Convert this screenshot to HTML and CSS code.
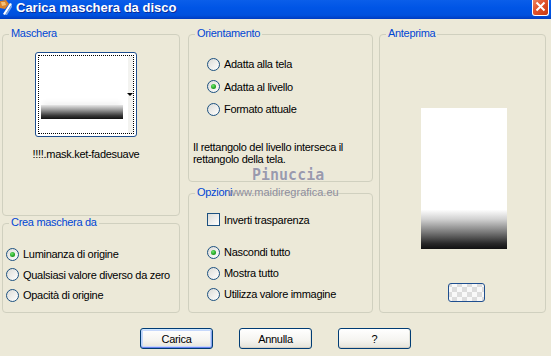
FILE: index.html
```html
<!DOCTYPE html>
<html lang="it">
<head>
    <meta charset="UTF-8">
    <title>Carica maschera da disco</title>
    <link rel="stylesheet" href="styles.css">
</head>
<body>
    <div class="window">
        <!-- Barra del titolo -->
        <div class="titlebar">
            <svg class="app-icon" width="12" height="16" viewBox="0 0 12 16">
                <path d="M0 1 L6 0 L9 4 L5 9 L0 8 Z" fill="#d9822b"/>
                <path d="M1 2 L5 2 L6 5 L2 6 Z" fill="#f3c27a"/>
                <path d="M3 14 L10 3 L12 4 L5 15 Z" fill="#ffffff"/>
                <path d="M5 15 L12 4 L12 7 L7 15 Z" fill="#7aa7e8"/>
            </svg>
            <span class="title">Carica maschera da disco</span>
            <span class="close">
                <svg width="15" height="15" viewBox="0 0 15 15">
                    <path d="M3.5 3.5 L11.5 11.5 M11.5 3.5 L3.5 11.5" stroke="#fff" stroke-width="2"/>
                </svg>
            </span>
        </div>

        <div class="client">
            <div class="panes">
                <div class="col col-left">
                    <div class="group g-maschera">
                        <span class="legend">Maschera</span>
                        <div class="thumb-wrap">
                            <div class="thumb">
                                <div class="focus">
                                    <div class="thumb-bar"></div>
                                    <span class="thumb-strip"></span>
                                    <span class="arrow"></span>
                                </div>
                            </div>
                            <div class="mask-name">!!!!.mask.ket-fadesuave</div>
                        </div>
                    </div>

                    <div class="group g-crea">
                        <span class="legend">Crea maschera da</span>
                        <div class="opts opts-crea">
                            <div class="opt"><span class="radio on"></span>Luminanza di origine</div>
                            <div class="opt"><span class="radio"></span>Qualsiasi valore diverso da zero</div>
                            <div class="opt"><span class="radio"></span>Opacità di origine</div>
                        </div>
                    </div>
                </div>

                <div class="col col-mid">
                    <div class="group g-orient">
                        <span class="legend">Orientamento</span>
                        <div class="opts opts-orient">
                            <div class="opt"><span class="radio"></span>Adatta alla tela</div>
                            <div class="opt"><span class="radio on"></span>Adatta al livello</div>
                            <div class="opt"><span class="radio"></span>Formato attuale</div>
                        </div>
                        <p class="note">Il rettangolo del livello interseca il<br>rettangolo della tela.</p>
                    </div>

                    <div class="group g-opzioni">
                        <span class="legend">Opzioni</span>
                        <div class="opts opts-opzioni">
                            <div class="opt opt-check"><span class="check"></span>Inverti trasparenza</div>
                            <div class="radios">
                                <div class="opt"><span class="radio on"></span>Nascondi tutto</div>
                                <div class="opt"><span class="radio"></span>Mostra tutto</div>
                                <div class="opt"><span class="radio"></span>Utilizza valore immagine</div>
                            </div>
                        </div>
                    </div>
                </div>

                <div class="col col-right">
                    <div class="group g-anteprima">
                        <span class="legend">Anteprima</span>
                        <div class="preview"></div>
                        <div class="preview-btn"></div>
                    </div>
                </div>
            </div>

            <div class="buttons">
                <button class="btn btn-default">Carica</button>
                <button class="btn">Annulla</button>
                <button class="btn">?</button>
            </div>
        </div>

        <!-- Filigrana -->
        <div class="watermark">
            <span class="wm-name">Pinuccia</span>
            <span class="wm-site">www.maidiregrafica.eu</span>
        </div>
    </div>
</body>
</html>
```

FILE: styles.css
```css
/* Finestra di dialogo stile XP */
body {
    margin: 0;
    background-color: #ece9d8;
    font-family: 'Liberation Sans', Arial, sans-serif;
    font-size: 11px;
    letter-spacing: -0.3px;
    color: #000000;
}

.window {
    position: relative;
    width: 551px;
    height: 356px;
    overflow: hidden;
}

/* Barra del titolo */
.titlebar {
    display: flex;
    align-items: flex-start;
    height: 19px;
    background: linear-gradient(#0a5eea, #0055e6 40%, #0051de 80%, #003cc0);
}

.app-icon {
    flex: none;
}

.title {
    margin-left: 4px;
    line-height: 15px;
    font-size: 13px;
    font-weight: bold;
    letter-spacing: 0;
    color: #ffffff;
    text-shadow: 1px 1px 0 #0a2d9a;
}

.close {
    display: flex;
    align-items: center;
    justify-content: center;
    margin-left: auto;
    margin-right: 2px;
    margin-top: -3px;
    width: 17px;
    height: 19px;
    box-sizing: border-box;
    border: 1px solid #ffffff;
    border-top: none;
    border-radius: 0 0 3px 3px;
    background: linear-gradient(135deg, #ef9272, #e2552e 45%, #c9380f);
}

/* Area client */
.client {
    padding: 15px 0 0 2px;
}

.panes {
    display: flex;
    gap: 8px;
}

.col {
    display: flex;
    flex-direction: column;
}

.col-left {
    width: 178px;
    gap: 7px;
}

.col-mid {
    width: 185px;
    gap: 11px;
}

.col-right {
    width: 167px;
    margin-left: -2px;
}

.group {
    position: relative;
    box-sizing: border-box;
    border: 1px solid #d0d0bf;
    border-radius: 4px;
}

.legend {
    position: absolute;
    top: -8px;
    left: 6px;
    padding: 0 2px;
    line-height: 13px;
    background-color: #ece9d8;
    color: #0046d5;
}

.g-maschera { height: 182px; }
.g-crea { height: 90px; }
.g-orient { height: 148px; }
.g-opzioni { height: 120px; }
.g-anteprima { height: 279px; }

/* Miniatura maschera */
.thumb-wrap {
    display: flex;
    flex-direction: column;
    align-items: center;
    width: 102px;
    margin: 17px 0 0 32px;
}

.thumb {
    width: 102px;
    height: 85px;
    box-sizing: border-box;
    padding: 2px;
    border: 1px solid #1f4f8f;
    border-radius: 3px;
    background-color: #ffffff;
}

.focus {
    position: relative;
    height: 100%;
    box-sizing: border-box;
    border: 1px dotted #000000;
}

.thumb-bar {
    width: 82px;
    height: 14px;
    margin: 49px 0 0 2px;
    background: linear-gradient(#e6e6e6, #9a9a9a 35%, #3a3a3a 75%, #111111);
    box-shadow: 0 -5px 5px -2px #f2f2f2;
}

.thumb-strip {
    position: absolute;
    top: 0;
    bottom: 0;
    right: 0;
    width: 5px;
    background-color: #f3f3f0;
}

.arrow {
    position: absolute;
    top: 37px;
    right: 0;
    width: 0;
    height: 0;
    border-left: 3px solid transparent;
    border-right: 3px solid transparent;
    border-top: 3px solid #000000;
}

.mask-name {
    margin-top: 11px;
    line-height: 13px;
    white-space: nowrap;
}

/* Opzioni radio e checkbox */
.opt {
    display: flex;
    align-items: center;
    gap: 4px;
    white-space: nowrap;
}

.radio,
.check {
    flex: none;
    position: relative;
    width: 13px;
    height: 13px;
    box-sizing: border-box;
    border: 1px solid #1c5180;
    background: linear-gradient(135deg, #dcdcd7, #ffffff);
}

.radio {
    border-radius: 50%;
}

.radio.on::after {
    content: '';
    position: absolute;
    left: 3px;
    top: 3px;
    width: 5px;
    height: 5px;
    border-radius: 50%;
    background: radial-gradient(circle at 40% 35%, #6ee86e, #21a121 60%, #178517);
}

.opts-crea {
    padding: 20px 0 0 3px;
}

.opts-crea .opt {
    height: 20.5px;
}

.opts-orient {
    padding: 18px 0 0 18px;
}

.opts-orient .opt {
    height: 22.5px;
}

.note {
    margin: 20px 0 0 4px;
    line-height: 12px;
}

.opts-opzioni {
    padding: 15px 0 0 18px;
}

.opts-opzioni .opt {
    height: 21px;
}

.radios {
    margin-top: 11.5px;
}

/* Anteprima */
.preview {
    width: 86px;
    height: 141px;
    margin: 73px 0 0 41px;
    background: linear-gradient(#ffffff, #ffffff 72%, #d0d0d0 79%, #7a7a7a 88%, #2a2a2a 96%, #111111);
}

.preview-btn {
    width: 37px;
    height: 19px;
    margin: 34px 0 0 68px;
    box-sizing: border-box;
    border: 1px solid #1f4f8f;
    border-radius: 3px;
    background-color: #f4f4f2;
    background-image: conic-gradient(#dcdcdc 25%, #f8f8f8 0 50%, #dcdcdc 0 75%, #f8f8f8 0);
    background-size: 10px 10px;
    background-position: 8px 3px;
}

/* Pulsanti */
.buttons {
    display: flex;
    justify-content: center;
    gap: 26px;
    margin-top: 15px;
    padding-right: 2px;
}

.btn {
    width: 73px;
    height: 21px;
    padding: 0;
    box-sizing: border-box;
    border: 1px solid #003c74;
    border-radius: 3px;
    background: linear-gradient(#ffffff, #f5f4f0 60%, #e4e2d8);
    box-shadow: inset 0 -1px 0 #d6d0c5, inset -1px 0 0 #e3e3db;
    font-family: inherit;
    font-size: 11px;
    letter-spacing: -0.3px;
    color: #000000;
}

.btn-default {
    box-shadow: inset 0 1px 0 #cee7ff, inset 0 -1px 0 #6982ee, inset 1px 0 0 #b8d2fa, inset -1px 0 0 #8aa4ee, inset 0 0 0 2px #c6d8fb;
}

/* Filigrana */
.watermark {
    position: absolute;
    left: 228px;
    top: 165px;
    display: flex;
    flex-direction: column;
    pointer-events: none;
}

.wm-name {
    margin-left: 24px;
    font-family: 'DejaVu Sans Mono', monospace;
    font-size: 15px;
    font-weight: bold;
    letter-spacing: 0;
    line-height: 20px;
    color: #9a9aac;
    text-shadow: 0 0 1px #ffffff;
}

.wm-site {
    margin-top: 1px;
    line-height: 13px;
    letter-spacing: 0;
    color: #8e8e9e;
}
```
